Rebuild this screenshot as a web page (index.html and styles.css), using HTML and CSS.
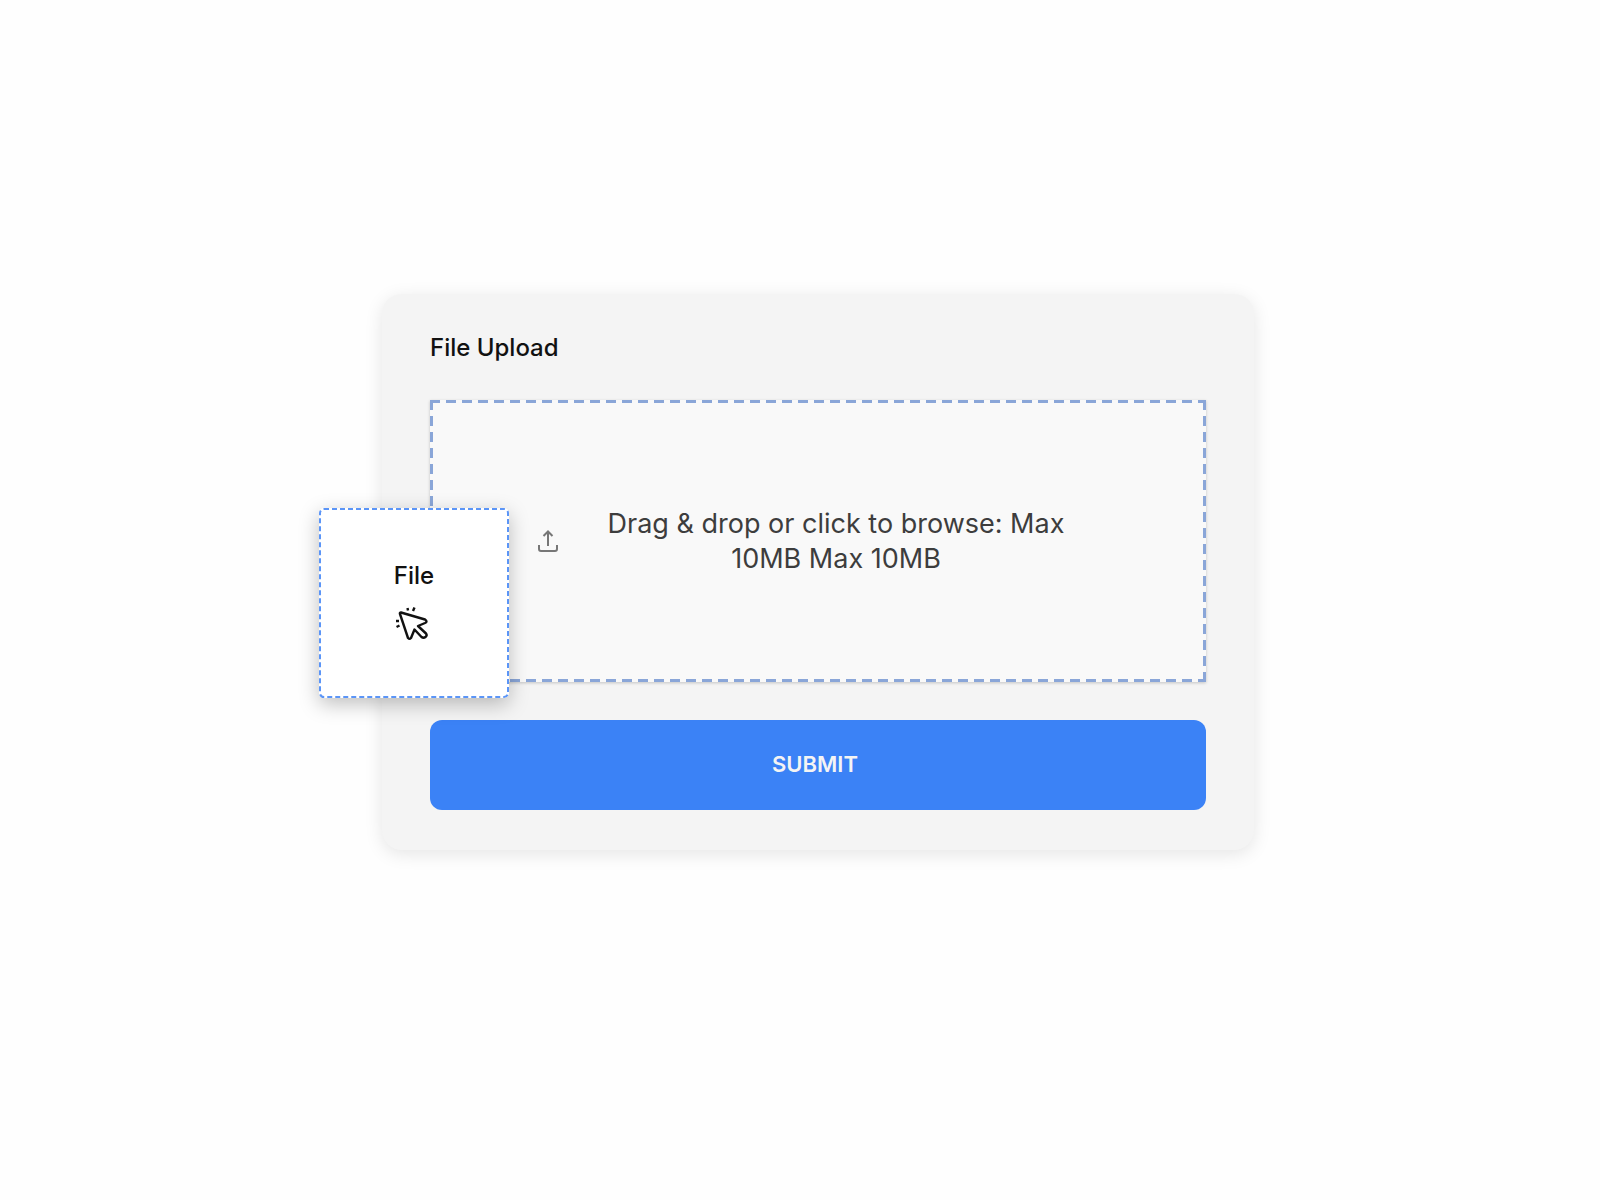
FILE: index.html
```html
<!DOCTYPE html>
<html lang="en">
<head>
    <meta charset="UTF-8">
    <meta name="viewport" content="width=device-width, initial-scale=1.0">
    <title>File Upload</title>
    <link rel="stylesheet" href="styles.css">
</head>
<body>
    <form class="upload-card">
        <h1 class="title">File Upload</h1>

        <!-- Drop area -->
        <label class="drop-zone" for="fileInput">
            <svg class="upload-icon" viewBox="0 0 24 24" aria-hidden="true">
                <path d="M12 17V2.500M7.500 7L12 2.500 16.500 7M3 16v4a2 2 0 0 0 2 2h14a2 2 0 0 0 2-2v-4"/>
            </svg>
            <span class="drop-text">Drag &amp; drop or click to browse: Max 10MB Max 10MB</span>
        </label>
        <input type="file" id="fileInput" class="file-input">

        <button type="submit" class="submit-btn">SUBMIT</button>

        <!-- File being dragged over the card -->
        <div class="file-tile">
            <svg class="tile-outline" aria-hidden="true">
                <rect x="1" y="1" width="188" height="188" rx="4"/>
            </svg>
            <span class="file-name">File</span>
            <svg class="cursor-icon" viewBox="2 0 36 36" aria-hidden="true">
                <path d="M7 7.500 L31 14.500 Q34 16.500 31 18 L24 21 L32 28.500 Q33.500 30.500 31.500 32 Q29.500 33.500 27.500 32 L20.500 24.500 L17 33 Q15.500 34.500 14 33 L6 9 Q5.500 7.500 7 7.500Z"/>
                <path d="M13.500 3l.5 2.500M20.500 2.500l-1.500 3.500M2 16h3M2.500 22l3-1.500"/>
            </svg>
        </div>
    </form>
</body>
</html>
```

FILE: styles.css
```css
* {
    box-sizing: border-box;
}
body {
    font-family: Inter, "Liberation Sans", sans-serif;
    margin: 0;
    padding: 0 0 56px 36px;
    min-height: 100vh;
    display: flex;
    justify-content: center;
    align-items: center;
    background-color: #fefefe;
}
.upload-card {
    position: relative;
    display: flex;
    flex-direction: column;
    width: 100%;
    max-width: 872px;
    padding: 40px 48px;
    background-color: #f4f4f4;
    border-radius: 20px;
    box-shadow: 0 4px 18px rgba(0, 0, 0, 0.1);
}
.title {
    margin: 0 0 38px;
    font-size: 24px;
    line-height: 28px;
    font-weight: 500;
    color: #111;
}
/* dashed outline, one strip per side */
.drop-zone {
    --dash: #8aa6d8 0 10px, transparent 10px 16px;
    display: flex;
    align-items: center;
    gap: 12px;
    min-height: 282px;
    padding: 0 106px;
    background:
        repeating-linear-gradient(to right, var(--dash)) top / 100% 3px no-repeat,
        repeating-linear-gradient(to right, var(--dash)) bottom / 100% 3px no-repeat,
        repeating-linear-gradient(to bottom, var(--dash)) left / 3px 100% no-repeat,
        repeating-linear-gradient(to bottom, var(--dash)) right / 3px 100% no-repeat,
        #f9f9f9;
    box-shadow: 0 1px 3px rgba(0, 0, 0, 0.2);
    cursor: pointer;
}
.upload-icon {
    flex: none;
    width: 24px;
    height: 24px;
    fill: none;
    stroke: #777;
    stroke-width: 2;
}
.drop-text {
    flex: 1;
    font-size: 27px;
    line-height: 35px;
    text-align: center;
    color: #3d3d3d;
}
.file-input {
    position: absolute;
    width: 1px;
    height: 1px;
    opacity: 0;
}
.submit-btn {
    height: 90px;
    margin-top: 38px;
    padding: 0 6px 2px 0;
    border: none;
    border-radius: 12px;
    background-color: #3b82f6;
    color: #f4f4f4;
    font-family: Inter, "Liberation Sans", sans-serif;
    font-size: 22px;
    font-weight: 600;
    cursor: pointer;
}
.file-tile {
    position: absolute;
    left: -63px;
    top: 214px;
    display: flex;
    flex-direction: column;
    align-items: center;
    justify-content: center;
    gap: 15px;
    width: 190px;
    height: 190px;
    padding-bottom: 4px;
    background-color: #fff;
    border-radius: 5px;
    box-shadow: 0 6px 20px rgba(0, 0, 0, 0.25);
}
.tile-outline {
    position: absolute;
    left: 0;
    top: 0;
    width: 100%;
    height: 100%;
    fill: none;
    stroke: #5b95f7;
    stroke-width: 2;
    stroke-dasharray: 5 3;
}
.file-name {
    font-size: 24px;
    line-height: 28px;
    font-weight: 500;
    color: #111;
}
.cursor-icon {
    width: 36px;
    height: 36px;
    fill: none;
    stroke: #111;
    stroke-width: 2.4;
    stroke-linejoin: round;
}
```
